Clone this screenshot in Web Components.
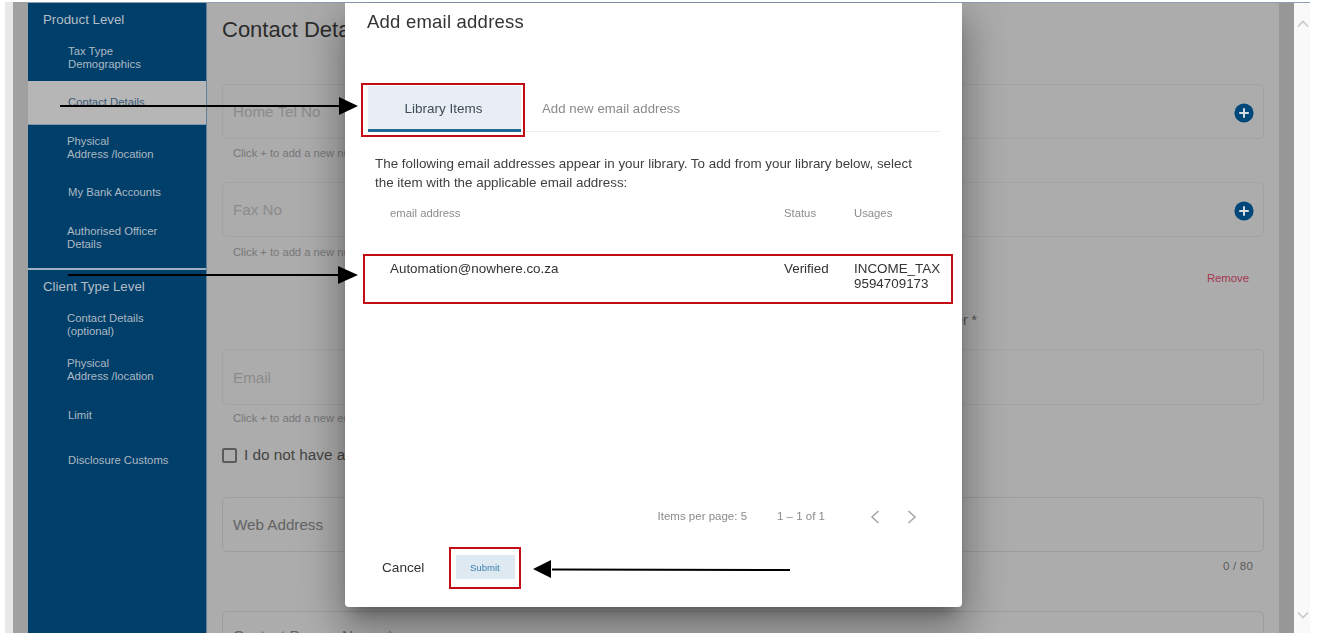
<!DOCTYPE html>
<html lang="en"><head><meta charset="utf-8"><title>Add email address</title>
<style>html,body{margin:0;padding:0;background:#fff;height:641px;overflow:hidden}</style></head>
<body>
<x-app>
  <x-sidebar slot="sidebar">
    <x-nav-head>Product Level</x-nav-head>
    <x-nav-item h="46" wide>Tax Type<br>Demographics</x-nav-item>
    <x-nav-item h="44" active wide>Contact Details</x-nav-item>
    <x-nav-item h="45">Physical<br>Address /location</x-nav-item>
    <x-nav-item h="44" wide>My Bank Accounts</x-nav-item>
    <x-nav-item h="47">Authorised Officer<br>Details</x-nav-item>
    <x-nav-divider></x-nav-divider>
    <x-nav-head class="second">Client Type Level</x-nav-head>
    <x-nav-item h="43">Contact Details<br>(optional)</x-nav-item>
    <x-nav-item h="47">Physical<br>Address /location</x-nav-item>
    <x-nav-item h="44" wide>Limit</x-nav-item>
    <x-nav-item h="46" wide>Disclosure Customs</x-nav-item>
  </x-sidebar>
  <x-contact-form slot="main"></x-contact-form>
  <x-dialog slot="overlay"></x-dialog>
  <x-annotations slot="overlay"></x-annotations>
</x-app>
<script>
const el=(name,html,init)=>{customElements.define(name,class extends HTMLElement{
  constructor(){super();this.attachShadow({mode:'open'}).innerHTML=html;}
  connectedCallback(){init&&init(this);}
});};
const PLUS=`<svg width="20" height="20" viewBox="0 0 20 20" style="display:block;margin-top:3px"><circle cx="10" cy="10" r="9.6" fill="#00487a"/><path d="M10 5.2v9.6M5.2 10h9.600" stroke="#d8dde2" stroke-width="2"/></svg>`;

el('x-app',`<style>
:host{display:flex;height:631px;margin-top:2px;position:relative;overflow:hidden;font-family:"Liberation Sans",Arial,sans-serif;filter:blur(.45px)}
.w{width:5px;flex:none;background:#fff}.l{width:8px;flex:none;background:#e8e8e8}.d{width:15px;flex:none;background:#a0a0a0}
.frame{flex:1;display:flex;min-width:0;border-top:1px solid #8c9fb3}
.side{width:179px;flex:none;display:block}
.main{flex:1;min-width:0;background:#acacac;overflow:hidden}
.r{width:15px;flex:none;background:#979797}
.sb{width:16px;flex:none;background:#f9f9f9;display:flex;flex-direction:column;justify-content:space-between;align-items:center;padding:17px 0 14px 1px;box-sizing:border-box}
.e{width:7px;flex:none;background:#fff}
</style>
<div class="w"></div><div class="l"></div><div class="d"></div>
<div class="frame">
  <div class="side"><slot name="sidebar"></slot></div>
  <div class="main"><slot name="main"></slot></div>
  <div class="r"></div>
  <div class="sb">
    <svg width="12" height="8" viewBox="0 0 12 8"><path d="M1 6.500l5-5 5 5" fill="none" stroke="#c9c9c9" stroke-width="1.6"/></svg>
    <svg width="12" height="8" viewBox="0 0 12 8"><path d="M1 1.500l5 5 5-5" fill="none" stroke="#c9c9c9" stroke-width="1.6"/></svg>
  </div>
</div>
<div class="e"></div>
<slot name="overlay"></slot>`);

el('x-sidebar',`<style>
:host{display:block;height:100%;background:#003f6a;border-right:1px solid #5d7f9c;box-sizing:border-box;color:#b3bcc5;font-size:11px}
</style><slot></slot>`);

el('x-nav-head',`<style>
:host{display:flex;align-items:center;height:32px;padding-left:15px;font-size:13.3px;color:#b4bdc6;line-height:15px}
:host(.second){height:33px}
</style><slot></slot>`);

el('x-nav-item',`<style>
:host{display:flex;align-items:center;padding-left:39px;font-size:11.3px;line-height:13px;color:#aeb8c2;box-sizing:border-box}
:host([wide]){padding-left:40px}
:host([active]){background:#b6b6b6;color:#3c5a76;border-bottom:1px solid #7d97ad}
</style><span><slot></slot></span>`,h=>{h.style.height=h.getAttribute('h')+'px';});

el('x-nav-divider',`<style>
:host{display:block;height:2px;margin-top:7px;background:#9fb2c3}
</style>`);

el('x-field',`<style>
:host{display:flex;align-items:center;justify-content:space-between;height:55px;box-sizing:border-box;border:1px solid #a3a3a3;border-radius:5px;padding:0 9px 0 10px;font-size:15.2px;color:#8b8b8b}
:host([strong]){color:#636363;border-color:#9d9d9d}
</style><span><slot></slot></span><slot name="end"></slot>`);

el('x-contact-form',`<style>
:host{display:block;padding:0 15px 0 15px;color:#777}
h1{font-size:22px;line-height:26px;font-weight:400;color:#2c2c2c;margin:14px 0 41px}
.note{font-size:11.2px;line-height:14px;color:#777;margin:7px 0 0 11px}
.n2{margin-top:8px}
.n3{margin-top:6px}
.f2{margin-top:22px}
.rm{font-size:11.3px;line-height:14px;color:#a5354f;text-align:right;margin:12px 15px 0 0}
.lb{font-size:14px;line-height:16px;color:#555;text-align:right;margin:27px 287px 0 0}
.em{margin-top:21px;height:56px}
.ck{display:flex;align-items:center;gap:7px;margin-top:21px;height:18px;font-size:15.3px;color:#444}
.box{width:15px;height:15px;box-sizing:border-box;border:2px solid #5c5c5c;border-radius:2px;flex:none}
.web{margin-top:33px}
.ct{font-size:11.5px;line-height:14px;color:#5a5a5a;text-align:right;margin:7px 11px 0 0;letter-spacing:.2px}
.cp{margin-top:38px;display:block;height:60px;padding-top:15px}
</style>
<h1>Contact Details</h1>
<x-field>Home Tel No<span slot="end">${PLUS}</span></x-field>
<div class="note">Click + to add a new number</div>
<x-field class="f2">Fax No<span slot="end">${PLUS}</span></x-field>
<div class="note n2">Click + to add a new number</div>
<div class="rm">Remove</div>
<div class="lb">Contact Number *</div>
<x-field class="em">Email</x-field>
<div class="note n3">Click + to add a new email</div>
<div class="ck"><span class="box"></span><span>I do not have an email address</span></div>
<x-field class="web" strong>Web Address</x-field>
<div class="ct">0 / 80</div>
<x-field class="cp" strong>Contact Person Name *</x-field>`);

el('x-dialog',`<style>
:host{position:absolute;left:345px;top:1px;width:617px;height:604px;box-sizing:border-box;background:#fff;border-radius:0 0 4px 4px;box-shadow:0 11px 15px -7px rgba(0,0,0,.3),0 24px 38px 3px rgba(0,0,0,.2),0 9px 46px 8px rgba(0,0,0,.16);display:flex;flex-direction:column;color:#333}
h2{font-size:18.5px;line-height:24px;font-weight:400;color:#333;margin:7px 0 0 22px;letter-spacing:.22px}
.tabs{display:flex;align-items:stretch;margin:52px 0 0 23px;width:572px;height:46px;box-sizing:border-box;border-bottom:1px solid #ececec;font-size:13.2px}
.t1{width:153px;height:46px;padding-top:1px;box-sizing:border-box;background:#e8eef3;border-bottom:3px solid #1f6a99;color:#3f4d59;display:flex;align-items:center;justify-content:center;font-size:13.5px;padding-right:2px}
.t2{margin-left:21px;height:44px;display:flex;align-items:center;color:#8a8a8a;letter-spacing:.05px}
p{font-size:13.4px;line-height:19px;color:#404040;margin:22px 0 0 30px;width:545px}
.g{display:grid;grid-template-columns:394px 70px 1fr;margin:0 0 0 45px;width:560px}
.h{font-size:11.3px;line-height:14px;color:#8d8d8d;padding-top:14px;padding-bottom:35px;border-bottom:1px solid #f0f0f0}
.c{font-size:13.4px;line-height:15px;color:#333;padding-top:5px}
.pg{margin-top:auto;display:flex;align-items:center;justify-content:flex-end;height:20px;padding-right:45px;font-size:11.500px;color:#8a8a8a}
.pg .rg{margin-left:30px}
.pg svg{display:block;position:relative;top:1px}
.pg .a{margin-left:45px}.pg .b{margin-left:27px}
.ft{display:flex;align-items:center;margin-top:29px;height:24px;padding:0 0 28px 37px;font-size:13.6px;color:#333}
.sub{margin-left:32px;width:59px;height:24px;background:#dfe9f1;color:#3d7fb0;font-size:9.6px;display:flex;align-items:center;justify-content:center;padding-right:2px;box-sizing:border-box}
</style>
<h2>Add email address</h2>
<div class="tabs"><div class="t1">Library Items</div><div class="t2">Add new email address</div></div>
<p>The following email addresses appear in your library. To add from your library below, select the item with the applicable email address:</p>
<div class="g">
  <div class="h">email address</div><div class="h">Status</div><div class="h">Usages</div>
  <div class="c">Automation@nowhere.co.za</div><div class="c">Verified</div><div class="c">INCOME_TAX<br>9594709173</div>
</div>
<div class="pg"><span>Items per page: 5</span><span class="rg">1 – 1 of 1</span>
  <svg class="a" width="10" height="14" viewBox="0 0 10 14"><path d="M8.500 1L2 7l6.500 6" fill="none" stroke="#a5a5a5" stroke-width="1.5"/></svg>
  <svg class="b" width="10" height="14" viewBox="0 0 10 14"><path d="M1.500 1L8 7l-6.500 6" fill="none" stroke="#a5a5a5" stroke-width="1.5"/></svg>
</div>
<div class="ft"><span>Cancel</span><span class="sub">Submit</span></div>`);

el('x-annotations',`<style>
:host{position:absolute;left:0;top:-2px;width:1317px;height:641px;pointer-events:none}
svg{display:block}
</style>
<svg width="1317" height="641" viewBox="0 0 1317 641">
<g fill="none" stroke="#c30d14" stroke-width="2">
<rect x="362" y="84" width="162" height="52"/>
<rect x="364" y="255" width="588" height="48"/>
<rect x="450" y="548" width="70" height="40"/>
</g>
<g stroke="#000" stroke-width="2">
<path d="M60 106H342M68 275H340M552 569.500L790 570"/>
</g>
<path d="M339 97L358 106L339 115Z M338 266L358 275L338 284Z M551 560V578L533 569Z" fill="#000"/>
</svg>`);
</script>
</body></html>
